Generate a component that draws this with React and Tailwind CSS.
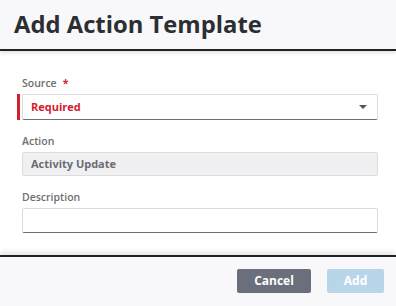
const Label = ({ children, required }) => (
  <div className="h-[16px] leading-[16px] text-[10.5px] font-semibold text-[#6d6e70] mb-[3px]">
    {children}
    {required && <span className="text-[#d3202f] ml-[6px] font-bold">*</span>}
  </div>
);

const App = () => {
  return (
    <div className="w-[396px] h-[306px] flex flex-col bg-white overflow-hidden" style={{ fontFamily: '"Open Sans", "Liberation Sans", sans-serif' }}>
      <div className="h-[51px] shrink-0 bg-[#f8f8fa] border-b-2 border-[#1f2227] flex items-center px-[14px] relative z-10 shadow-[0_2px_4px_rgba(0,0,0,0.12)]">
        <h1 className="text-[23.8px] font-bold text-[#2b2e33]">Add Action Template</h1>
      </div>

      <div className="flex-1 pt-[24px] pl-[22px] pr-[18px]">
        <Label required>Source</Label>
        <div className="flex h-[26px] -ml-[5px]">
          <div className="w-[3px] bg-[#d3202f] mr-[2px]" />
          <div className="flex-1 flex items-center justify-between border border-[#dcdcdc] border-b-[#707070] rounded-[2px] pl-[8px] pr-[10px]">
            <span className="text-[11px] font-bold text-[#d3202f]">Required</span>
            <svg width="8" height="4" viewBox="0 0 8 4">
              <path d="M0 0h8L4 4z" fill="#555" />
            </svg>
          </div>
        </div>

        <div className="mt-[13px]">
          <Label>Action</Label>
          <div className="h-[24px] flex items-center border border-[#dcdcdc] rounded-[2px] bg-[#f0f0f3] pl-[8px]">
            <span className="text-[11px] font-bold text-[#6b6c70]">Activity Update</span>
          </div>
        </div>

        <div className="mt-[13px]">
          <Label>Description</Label>
          <div className="h-[25px] border border-[#dcdcdc] border-b-[#707070] rounded-[2px] bg-white" />
        </div>
      </div>

      <div className="h-[51px] shrink-0 bg-[#f8f8fa] border-t-2 border-[#1f2227] flex items-center justify-end gap-[16px] pr-[12px] pb-[2px] relative shadow-[0_-3px_5px_rgba(0,0,0,0.1)]">
        <button className="w-[74px] h-[24px] rounded-[2px] bg-[#6b6e7b] text-white text-[12px] font-bold">Cancel</button>
        <button className="w-[57px] h-[24px] rounded-[2px] bg-[#b9d5ea] text-white text-[12px] font-bold">Add</button>
      </div>
    </div>
  );
};

export default App;
